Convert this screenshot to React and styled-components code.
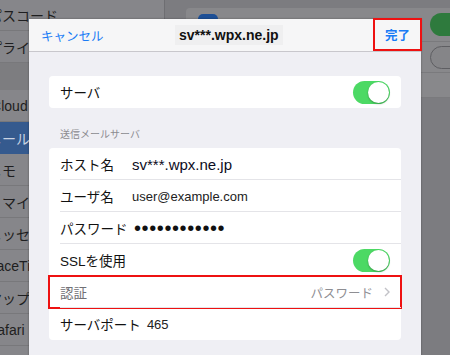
import React from "react";
import styled, { createGlobalStyle } from "styled-components";

const Global = createGlobalStyle`
  html, body { margin: 0; padding: 0; }
  body {
    font-family: "Liberation Sans", "Noto Sans CJK JP", sans-serif;
    background: #7c7c80;
  }
`;

const Page = styled.div`
  position: relative;
  width: 450px;
  height: 355px;
  overflow: hidden;
  display: flex;
  background: #7c7c80;
`;

/* ---------- dimmed settings screen behind the sheet ---------- */

const Sidebar = styled.div`
  width: 176px;
  margin-left: -12px;
  flex-shrink: 0;
  display: flex;
  flex-direction: column;
  margin-top: -1px;
  background: #7f7f82;
  border-right: 1px solid #6e6e72;
`;

const SideRow = styled.div`
  height: 32px;
  flex-shrink: 0;
  display: flex;
  align-items: center;
  font-size: 14px;
  color: ${p => (p.selected ? "#c9d3e2" : "#1e1e20")};
  background: ${p => (p.selected ? "#355a8e" : "#86868a")};
  border-bottom: 1px solid ${p => (p.selected ? "#355a8e" : "#78787b")};
  box-sizing: border-box;
  white-space: nowrap;
`;

const SideGap = styled.div`
  height: 27px;
  flex-shrink: 0;
  background: #7d7d80;
`;

const Detail = styled.div`
  flex: 1;
  display: flex;
  flex-direction: column;
  padding: 8px 0 0 21px;
`;

const DetailCard = styled.div`
  background: #88888b;
  border-radius: 4px 0 0 4px;
  display: flex;
  flex-direction: column;
`;

const DetailRow = styled.div`
  height: ${p => p.h}px;
  display: flex;
  align-items: center;
  justify-content: space-between;
  padding: 0 0 0 12px;
  border-bottom: 1px solid #7a7a7d;
  box-sizing: border-box;
`;

const AppIcon = styled.div`
  width: 20px;
  height: 22px;
  border-radius: 5px;
  background: #1d4f96;
`;

const BgToggle = styled.div`
  width: 40px;
  height: 23px;
  border-radius: 12px;
  margin-right: -20px;
  background: ${p => (p.on ? "#2e7a3d" : "#858588")};
  border: ${p => (p.on ? "none" : "1.5px solid #5e5e62")};
  box-sizing: border-box;
`;

/* ---------- sheet ---------- */

const Sheet = styled.div`
  position: absolute;
  left: 29px;
  top: 19px;
  width: 392px;
  height: 345px;
  background: #efeff4;
  box-shadow: 0 0 2px rgba(0, 0, 0, 0.35);
  display: flex;
  flex-direction: column;
`;

const NavBar = styled.div`
  position: relative;
  height: 32px;
  flex-shrink: 0;
  display: flex;
  align-items: center;
  justify-content: space-between;
  padding: 0 0 0 12px;
  background: #f6f6f7;
  border-bottom: 1px solid #c8c7cc;
`;

const NavButton = styled.span`
  font-size: 12.5px;
  color: #1a7cf5;
  font-weight: ${p => (p.bold ? 700 : 400)};
`;

const NavTitle = styled.span`
  position: absolute;
  left: 146px;
  top: 6px;
  padding: 2px 4px;
  font-size: 14px;
  font-weight: 700;
  color: #111;
  background: #efeff0;
`;

const Highlight = styled.div`
  display: flex;
  align-items: center;
  justify-content: center;
  width: 49px;
  height: 33px;
  margin-top: -1px;
  margin-right: -1px;
  border: 2px solid #ee1111;
  box-sizing: border-box;
`;

const Body = styled.div`
  padding: 24px 20px 0;
  display: flex;
  flex-direction: column;
`;

const Card = styled.div`
  background: #fff;
  border-radius: 4px;
  display: flex;
  flex-direction: column;
`;

const SectionLabel = styled.div`
  margin: 21px 0 7px 11px;
  font-size: 10px;
  color: #8b8b90;
  line-height: 12px;
`;

const Row = styled.div`
  position: relative;
  height: 32px;
  display: flex;
  align-items: center;
  padding: 0 11px;
  &:not(:last-child)::after {
    content: "";
    position: absolute;
    left: 11px;
    right: 0;
    bottom: 0;
    height: 1px;
    background: #e4e4e8;
  }
`;

const Label = styled.span`
  width: ${p => (p.w ? `${p.w}px` : "auto")};
  flex-shrink: 0;
  font-size: 13.5px;
  color: ${p => (p.muted ? "#707075" : "#111")};
  white-space: nowrap;
`;

const Value = styled.span`
  font-size: ${p => p.size || 13}px;
  color: ${p => p.color || "#222"};
  margin-left: ${p => p.gap || 0}px;
  white-space: nowrap;
`;

const Dots = styled.span`
  font-size: 20px;
  letter-spacing: 0.6px;
  color: #111;
  line-height: 1;
  margin-left: 2px;
`;

const Spacer = styled.div`
  flex: 1;
`;

const Switch = styled.div`
  position: relative;
  width: 37px;
  height: 23px;
  border-radius: 12px;
  background: #4cd964;
  &::after {
    content: "";
    position: absolute;
    right: 1px;
    top: 1px;
    width: 21px;
    height: 21px;
    border-radius: 50%;
    background: #fff;
    box-shadow: 0 1px 2px rgba(0, 0, 0, 0.3);
  }
`;

const Detailed = styled.span`
  font-size: 12.5px;
  color: #8e8e93;
  display: flex;
  align-items: center;
  gap: 11px;
`;

const Boxed = styled.div`
  position: absolute;
  inset: -1px;
  border: 2px solid #ee1111;
  pointer-events: none;
`;

const Chevron = () => (
  <svg width="6" height="10" viewBox="0 0 6 10">
    <path d="M1 1l4 4-4 4" fill="none" stroke="#c2c2c7" strokeWidth="1.4" />
  </svg>
);

const sideItems = [
  ["パスコード"],
  ["プライバシー"],
  null,
  ["iCloud"],
  ["メール/連絡先/カレンダー", true],
  ["メモ"],
  ["リマインダー"],
  ["メッセージ"],
  ["FaceTime"],
  ["マップ"],
  ["Safari"],
  ["ミュージック"],
];

export default function App() {
  return (
    <Page>
      <Global />
      <Sidebar>
        {sideItems.map((it, i) =>
          it ? (
            <SideRow key={i} selected={it[1]}>
              {it[0]}
            </SideRow>
          ) : (
            <SideGap key={i} />
          )
        )}
      </Sidebar>
      <Detail>
        <DetailCard>
          <DetailRow h={34}>
            <AppIcon />
            <BgToggle on />
          </DetailRow>
          <DetailRow h={31}>
            <span />
            <BgToggle />
          </DetailRow>
          <DetailRow h={25} />
        </DetailCard>
      </Detail>

      <Sheet>
        <NavBar>
          <NavButton>キャンセル</NavButton>
          <NavTitle>sv***.wpx.ne.jp</NavTitle>
          <Highlight>
            <NavButton bold>完了</NavButton>
          </Highlight>
        </NavBar>
        <Body>
          <Card>
            <Row>
              <Label>サーバ</Label>
              <Spacer />
              <Switch />
            </Row>
          </Card>
          <SectionLabel>送信メールサーバ</SectionLabel>
          <Card>
            <Row>
              <Label w={72}>ホスト名</Label>
              <Value size={15} color="#0c0c22">sv***.wpx.ne.jp</Value>
            </Row>
            <Row>
              <Label w={72}>ユーザ名</Label>
              <Value>user@example.com</Value>
            </Row>
            <Row>
              <Label w={72}>パスワード</Label>
              <Dots>••••••••••••</Dots>
            </Row>
            <Row>
              <Label>SSLを使用</Label>
              <Spacer />
              <Switch />
            </Row>
            <Row>
              <Label muted>認証</Label>
              <Spacer />
              <Detailed>
                パスワード
                <Chevron />
              </Detailed>
              <Boxed />
            </Row>
            <Row>
              <Label>サーバポート</Label>
              <Value gap={6}>465</Value>
            </Row>
          </Card>
        </Body>
      </Sheet>
    </Page>
  );
}
